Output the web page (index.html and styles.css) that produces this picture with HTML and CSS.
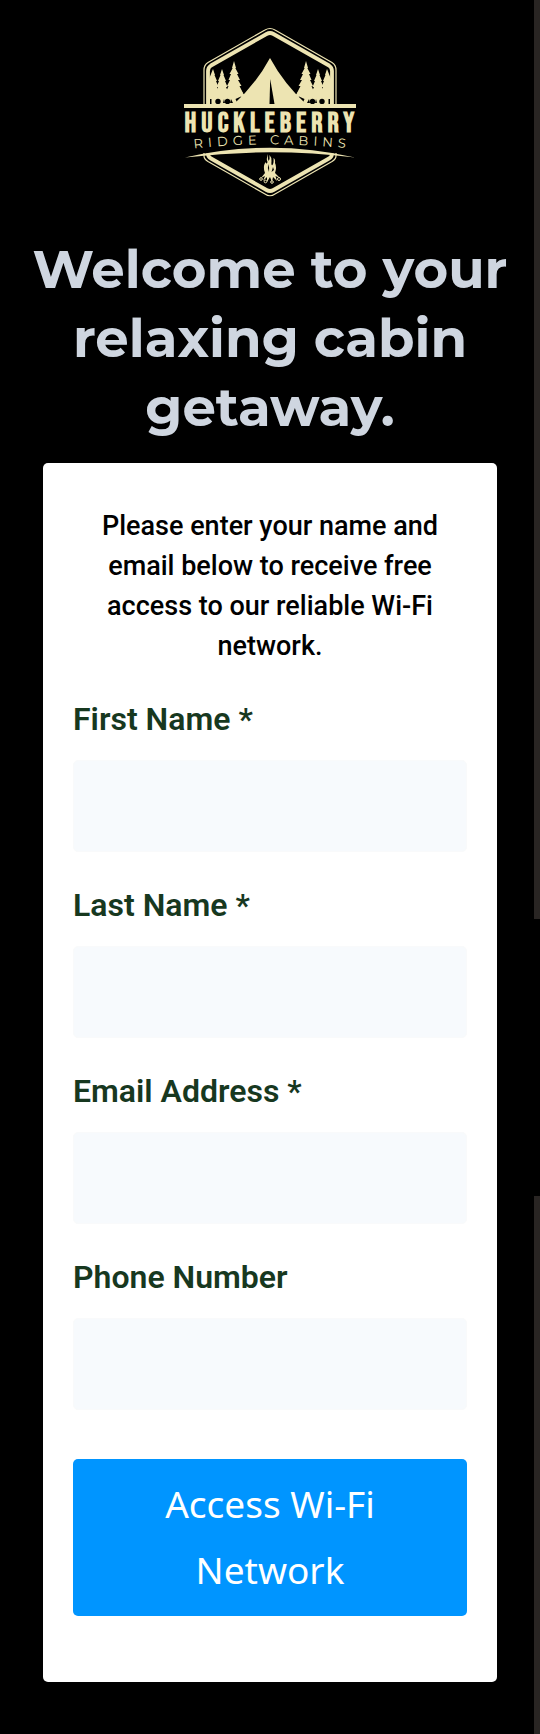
FILE: index.html
```html
<!DOCTYPE html>
<html lang="en">
<head>
    <meta charset="UTF-8">
    <meta name="viewport" content="width=device-width, initial-scale=1.0">
    <title>Huckleberry Ridge Cabins - Guest Wi-Fi</title>
    <link rel="stylesheet" href="styles.css">
</head>
<body>
    <header class="header">
        <svg class="logo" viewBox="0 0 200 190" role="img" aria-label="Huckleberry Ridge Cabins">
            <defs>
                <path id="ridge" d="M24 133.500 Q100 125 184 134"/>
                <!-- three pines and the bushes below them -->
                <g id="pines">
                    <path d="M43 54 L45 60 L44.500 60 L47 66 L46 66 L48.500 72 L47 72 L49 78 L49 84 L39 84 L39 64 Z"/>
                    <path d="M52 54 L54 60 L53.500 60 L56 66 L55 66 L57.500 72 L56 72 L59 79 L57 84 L47 84 L45 79 L48 72 L46.500 72 L49 66 L48 66 L50.500 60 L50 60 Z"/>
                    <path d="M64 46 L66 53 L65.300 53 L68.500 59 L67 59 L70 65 L68 65 L71.500 71 L69.500 71 L73 78 L70 78 L73 83 L55 83 L58 78 L55.500 78 L58.500 71 L57 71 L60 65 L58.500 65 L61 59 L59.500 59 L62.700 53 L62 53 Z"/>
                    <path d="M39 77 H72 L76 82 V90 H39 Z"/>
                    <g fill="#000">
                        <path d="M40 84 h1.500 v5 h-1.500 Z"/>
                        <circle cx="48" cy="86.500" r="2.700"/>
                        <circle cx="57.500" cy="86.500" r="2.700"/>
                        <path d="M54 84 L55 88 L53 88 Z M61 84 L63 88 L60 88 Z"/>
                        <path d="M65.500 84 L71 81.500 L72.500 83 L67 87.500 Z"/>
                    </g>
                </g>
            </defs>
            <!-- frame -->
            <g fill="none" stroke="#ede4b2" stroke-linejoin="round">
                <path stroke-width="1.200" d="M34 90 V55 Q34 50 38 47.500 L95 15 Q100 12 105 15 L162 47.500 Q166 50 166 55 V90"/>
                <path stroke-width="3.800" d="M38 90 V56 Q38 52.500 41 50.500 L96.500 19 Q100 17 103.500 19 L159 50.500 Q162 52.500 162 56 V90"/>
                <path stroke-width="1.200" d="M34 138 V141 Q34 144 38 146.500 L95 179 Q100 182.500 105 179 L162 146.500 Q166 144 166 141 V138"/>
                <path stroke-width="3.800" d="M38 138.500 Q38 142 41 143.500 L96.500 175 Q100 177 103.500 175 L159 143.500 Q162 142 162 138.500"/>
            </g>
            <g fill="#ede4b2">
                <use href="#pines"/>
                <use href="#pines" transform="translate(200 0) scale(-1 1)"/>
                <!-- tent -->
                <path d="M100 43 Q114 69 137 90 H63 Q86 69 100 43 Z"/>
                <path fill="#000" d="M100.200 64 L104.500 89 H99.500 Z"/>
                <rect x="14" y="89" width="172" height="4"/>
                <path d="M15 142.500 Q100 123 185 142.500 Q100 132 15 142.500 Z"/>
                <text class="logo-name" x="102" y="117" text-anchor="middle">HUCKLEBERRY</text>
                <text class="logo-sub"><textPath href="#ridge">RIDGE CABINS</textPath></text>
                <!-- campfire -->
                <path d="M98 139 Q96 144 97.500 147 Q96.500 150 95.500 147 Q92.500 152 95 158 L91 163 L95 161 L93 166 L97 162 L97 167 L100 162 L102 167 L103 162 L107 166 L105.500 161 L110 163 L105 158 Q107 152 105 148 Q105.500 144 103.500 143 Q104 148 102.500 150 Q101 151 101.500 146 Q101.500 142 99.500 140 Q100 144 98.700 146 Q97.500 144 98 139 Z"/>
                <path fill="#000" d="M98.500 149 Q97 153 99 157 Q99.500 153 98.500 149 Z M103 152 L101.500 157 L104 155 Z"/>
            </g>
            <g fill="none" stroke="#ede4b2" stroke-width="1">
                <circle cx="91" cy="164" r="1.300"/>
                <circle cx="95.500" cy="166.500" r="1.300"/>
                <circle cx="102" cy="167" r="1.300"/>
                <circle cx="109" cy="164" r="1.500"/>
            </g>
        </svg>
        <h1 class="title">Welcome to your relaxing cabin getaway.</h1>
    </header>

    <main class="main">
        <form class="card" action="#" method="post">
            <p class="intro">Please enter your name and email below to receive free access to our reliable Wi-Fi network.</p>

            <div class="field">
                <label for="firstName">First Name *</label>
                <input type="text" id="firstName" name="firstName" required>
            </div>
            <div class="field">
                <label for="lastName">Last Name *</label>
                <input type="text" id="lastName" name="lastName" required>
            </div>
            <div class="field">
                <label for="email">Email Address *</label>
                <input type="email" id="email" name="email" required>
            </div>
            <div class="field">
                <label for="phone">Phone Number</label>
                <input type="tel" id="phone" name="phone">
            </div>

            <button class="btn" type="submit">Access Wi-Fi Network</button>
        </form>
    </main>
</body>
</html>
```

FILE: styles.css
```css
* {
    box-sizing: border-box;
}

body {
    margin: 0;
    min-height: 100vh;
    font-family: Roboto, sans-serif;
    /* scroll track along the right edge */
    background: linear-gradient(#292523 53%, #000 53%, #000 69%, #292523 69%) right top / 6px 100% no-repeat #000;
}

.header {
    padding: 15px 24px 0;
    text-align: center;
}

.logo {
    display: block;
    width: 200px;
    margin: 0 auto 30px;
}

.logo-name {
    font-family: 'Bebas Neue', Oswald, 'Roboto Condensed', Roboto, sans-serif;
    font-size: 28px;
    font-weight: bold;
    letter-spacing: 5px;
}

.logo-sub {
    font-family: Montserrat, Lato, sans-serif;
    font-size: 13px;
    letter-spacing: 5px;
}

.title {
    margin: 0 0 21px;
    color: #cfd6e0;
    font-family: Montserrat, Inter, sans-serif;
    font-size: 53px;
    font-weight: 700;
    line-height: 69px;
}

.main {
    padding: 0 43px 51px;
}

.card {
    padding: 43px 30px 66px;
    background: #fff;
    border-radius: 5px;
}

.intro {
    margin: 0 20px 28px;
    color: #000;
    font-size: 27px;
    font-weight: 500;
    line-height: 40px;
    text-align: center;
}

.field {
    margin-bottom: 28px;
}

.field label {
    display: block;
    margin-bottom: 16px;
    color: #17381f;
    font-size: 32px;
    font-weight: 600;
    line-height: 50px;
}

.field input {
    display: block;
    width: 100%;
    height: 92px;
    padding: 0 24px;
    border: 1px solid #f9fafb;
    border-radius: 5px;
    background: #f7fafd;
    font-family: inherit;
    font-size: 32px;
}

.btn {
    display: block;
    width: 100%;
    margin-top: 49px;
    padding: 12px 64px 13px;
    border: none;
    border-radius: 5px;
    background: #0095ff;
    color: #fff;
    font-family: 'Noto Sans', sans-serif;
    font-size: 37px;
    line-height: 66px;
    cursor: pointer;
}
```
